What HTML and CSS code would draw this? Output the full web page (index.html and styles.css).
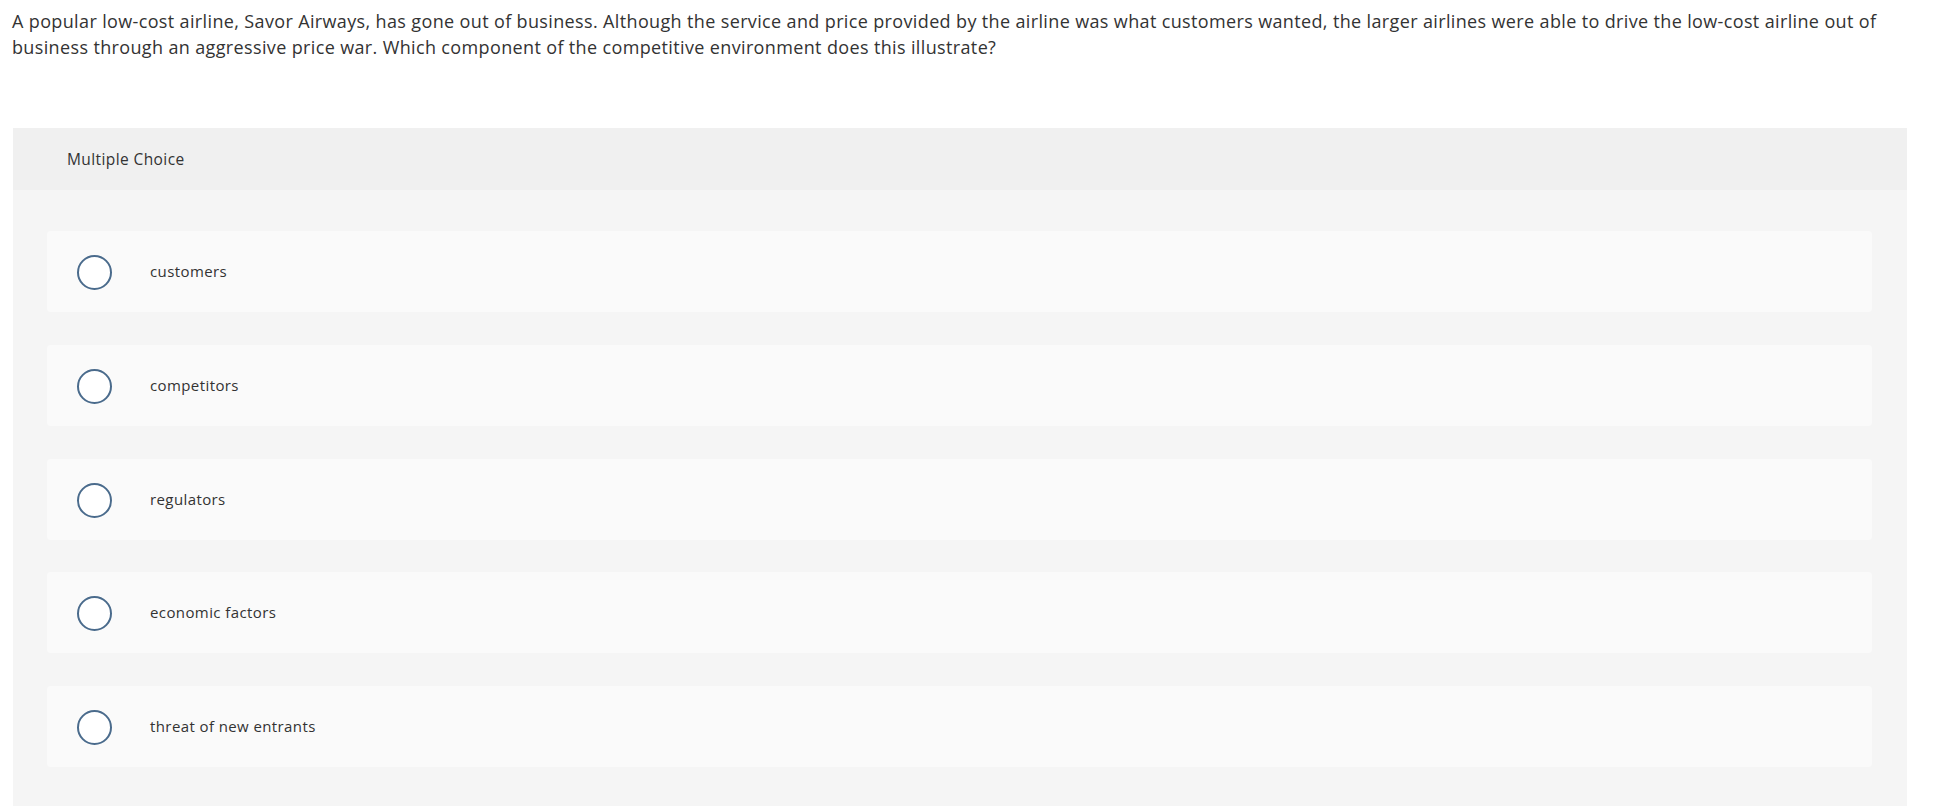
FILE: index.html
```html
<!DOCTYPE html>
<html lang="en">
<head>
<meta charset="utf-8">
<title>Multiple Choice</title>
<link rel="stylesheet" href="styles.css">
</head>
<body>
<div class="page">
  <p class="question">A popular low-cost airline, Savor Airways, has gone out of business. Although the service and price provided by the airline was what customers wanted, the larger airlines were able to drive the low-cost airline out of business through an aggressive price war. Which component of the competitive environment does this illustrate?</p>
  <section class="panel">
    <header class="panel-head">Multiple Choice</header>
    <div class="options">
      <label class="option"><span class="radio"></span><span class="label">customers</span></label>
      <label class="option"><span class="radio"></span><span class="label">competitors</span></label>
      <label class="option"><span class="radio"></span><span class="label">regulators</span></label>
      <label class="option"><span class="radio"></span><span class="label">economic factors</span></label>
      <label class="option"><span class="radio"></span><span class="label">threat of new entrants</span></label>
    </div>
  </section>
</div>
</body>
</html>
```
FILE: styles.css
```css
html, body {
  margin: 0;
  padding: 0;
  background: #ffffff;
}
body {
  font-family: "Open Sans", "Liberation Sans", sans-serif;
  color: #333333;
}
.page {
  padding: 0 27px 0 12px;
}
.question {
  margin: 0;
  padding-top: 8px;
  font-size: 18px;
  line-height: 26px;
  letter-spacing: 0.36px;
  color: #333333;
}
.panel {
  margin-top: 68px;
  margin-left: 1px;
  background: #f5f5f5;
}
.panel-head {
  background: #f0f0f0;
  height: 62px;
  display: flex;
  align-items: center;
  padding-left: 54px;
  font-size: 15.5px;
  letter-spacing: 0.4px;
  color: #333333;
}
.options {
  display: flex;
  flex-direction: column;
  gap: 32.75px;
  padding: 41px 35px 40px 34px;
}
.option {
  display: flex;
  align-items: center;
  height: 81px;
  background: #fafafa;
  border-radius: 4px;
  padding-left: 30px;
  box-sizing: border-box;
}
.radio {
  width: 35px;
  height: 35px;
  box-sizing: border-box;
  border: 2px solid #4a6b8c;
  border-radius: 50%;
  background: #ffffff;
  flex: none;
  margin-top: 2px;
}
.label {
  margin-left: 38px;
  margin-bottom: 1px;
  font-size: 15px;
  letter-spacing: 0.4px;
  color: #333333;
}
```
